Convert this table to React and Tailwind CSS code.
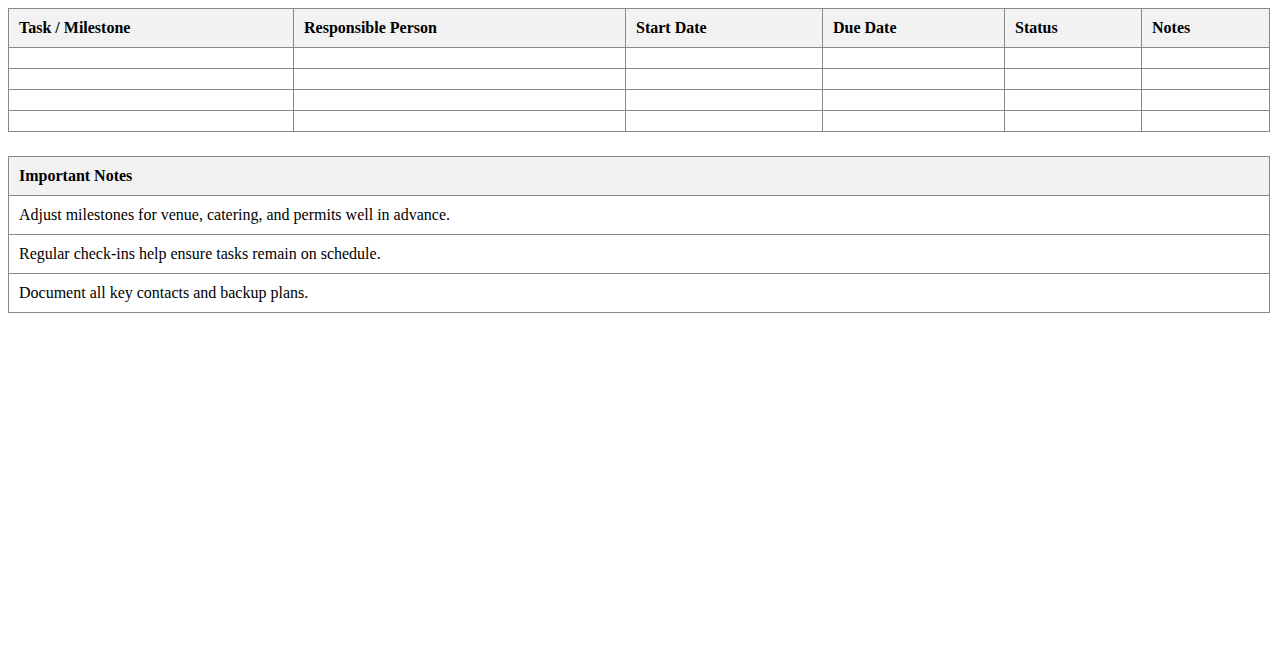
export default function App() {
  const cols = ["Task / Milestone", "Responsible Person", "Start Date", "Due Date", "Status", "Notes"];
  const widths = ["w-[285px]", "w-[332px]", "w-[197px]", "w-[182px]", "w-[137px]", ""];
  const rows = [0, 1, 2, 3];
  const notes = [
    "Adjust milestones for venue, catering, and permits well in advance.",
    "Regular check-ins help ensure tasks remain on schedule.",
    "Document all key contacts and backup plans.",
  ];
  return (
    <div className="p-2 bg-white text-black text-[16px] leading-[normal] font-['Liberation_Serif','Times_New_Roman',serif] min-h-[650px]">
      <table className="w-full table-fixed border-collapse">
        <colgroup>
          {widths.map((w, i) => (
            <col key={i} className={w} />
          ))}
        </colgroup>
        <thead>
          <tr>
            {cols.map((c) => (
              <th key={c} className="border border-[#888] bg-[#f2f2f2] p-[10px] text-left font-bold">
                {c}
              </th>
            ))}
          </tr>
        </thead>
        <tbody>
          {rows.map((r) => (
            <tr key={r}>
              {cols.map((c) => (
                <td key={c} className="border border-[#888] p-[10px]"></td>
              ))}
            </tr>
          ))}
        </tbody>
      </table>
      <table className="w-full border-collapse mt-6">
        <thead>
          <tr>
            <th className="border border-[#888] bg-[#f2f2f2] p-[10px] text-left font-bold">Important Notes</th>
          </tr>
        </thead>
        <tbody>
          {notes.map((n) => (
            <tr key={n}>
              <td className="border border-[#888] p-[10px]">{n}</td>
            </tr>
          ))}
        </tbody>
      </table>
    </div>
  );
}
